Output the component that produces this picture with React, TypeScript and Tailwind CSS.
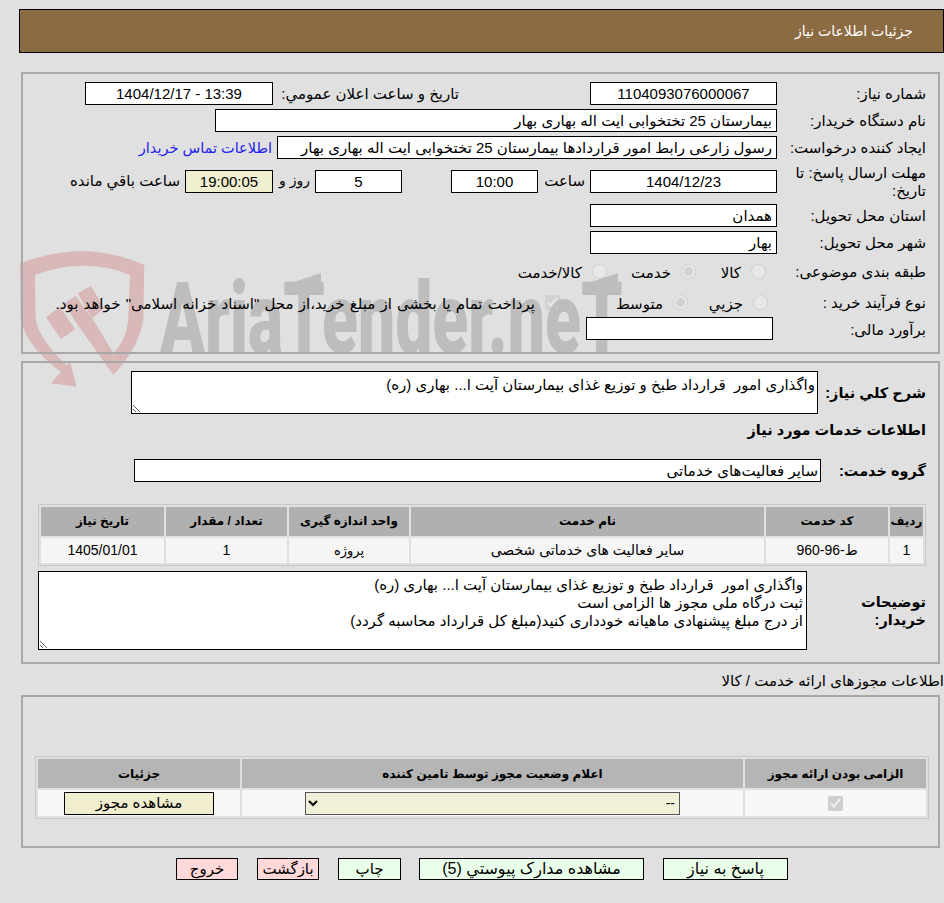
import type { ReactNode } from "react";

const font = "font-['Liberation_Sans','DejaVu_Sans',sans-serif]";

// فیلد فقط خواندنی با کادر سیاه
const Box = ({ className = "", children }: { className?: string; children?: ReactNode }) => (
  <div className={`h-[23px] border border-black bg-white leading-[21px] whitespace-nowrap overflow-hidden ${className}`}>
    {children}
  </div>
);

const Label = ({ children, className = "pt-[1px]" }: { children: ReactNode; className?: string }) => (
  <div className={`w-[161px] shrink-0 pr-[12px] text-right whitespace-nowrap ${className}`}>{children}</div>
);

const Logo = () => (
  <svg viewBox="0 0 450 480" className="absolute left-[15px] top-[240px] w-[150px] h-[160px]">
    <path
      fill="#d9b8b9"
      d="M15 70 Q210 -5 388 75 L385 235 Q375 320 295 405 L295 340 Q335 300 340 235 L345 105 Q210 50 60 105 L62 235 Q70 300 165 385 L150 405 Q30 320 17 235 Z"
    />
    <path fill="#d9b8b9" d="M165 365 L185 440 L108 430 Z" />
    <path fill="#d9b8b9" d="M93 232 L135 200 L180 268 L138 298 Z" />
    <path fill="#d9b8b9" d="M148 190 L182 168 L232 235 L295 340 L295 405 L178 240 Z" />
    <path fill="#d9b8b9" d="M188 160 L228 138 L268 205 L232 235 Z" />
  </svg>
);

// شیب بالای حرف T در لوگو
const TSlants = () => (
  <svg viewBox="0 0 944 903" className="absolute inset-0 w-[944px] h-[903px]">
    <path fill="#bdbdbd" d="M288 284 L321 273 L321 284 Z" />
    <path fill="#bdbdbd" d="M585 284 L618 273 L618 284 Z" />
  </svg>
);

const Radio = ({ checked, label, circle = "", text }: { checked?: boolean; label: string; circle?: string; text: string }) => (
  <div className="flex items-center">
    <input type="radio" disabled defaultChecked={checked} className={`w-[15px] h-[15px] m-0 opacity-60 ${circle}`} />
    <span className={`pt-[4px] ${text}`}>{label}</span>
  </div>
);

const Th = ({ className = "", children }: { className?: string; children: ReactNode }) => (
  <div className={`flex h-[29px] items-center justify-center whitespace-nowrap bg-[#b0b0b0] font-bold text-[12px] ${className}`}>{children}</div>
);

const Td = ({ className = "", children }: { className?: string; children?: ReactNode }) => (
  <div className={`flex h-[25px] items-center justify-center bg-[#f5f5f5] text-[14px] ${className}`}>{children}</div>
);

const ActionButton = ({ className, children }: { className: string; children: ReactNode }) => (
  <button className={`h-[22px] border border-black leading-[20px] text-center ${className}`}>{children}</button>
);

export default function App() {
  return (
    <div dir="rtl" className={`relative w-[944px] h-[903px] overflow-hidden bg-[#e0e0e0] text-[15px] text-black ${font}`}>
      {/* واترمارک پشت فرم */}
      <div className="absolute inset-0 z-0 pointer-events-none">
        <Logo />
        <div
          dir="ltr"
          className="absolute left-[160px] top-[256px] origin-top-left scale-x-[0.66] text-[100px] leading-[125px] font-black text-[#bdbdbd] whitespace-nowrap font-['Roboto',sans-serif]"
        >
          AriaTender.neT
        </div>
        <TSlants />
      </div>

      <div className="relative z-10 pt-[9px] pl-[21px] pr-[4px]">
        <div className="-ml-[2px] -mr-[4px] flex h-[44px] items-center border border-black bg-[#8b6b42] pr-[30px] text-[14px] text-white">
          جزئیات اطلاعات نیاز
        </div>

        {/* مشخصات نیاز */}
        <div className="mt-[19px] h-[282px] border-2 border-[#a8a8a8] pt-[8px]">
          <div className="flex h-[27px] items-start">
            <Label>شماره نیاز:</Label>
            <Box className="w-[187px] text-center">1104093076000067</Box>
            <div className="w-[317px] shrink-0 pr-[131px] pt-[1px] whitespace-nowrap">تاریخ و ساعت اعلان عمومي:</div>
            <Box className="w-[188px] text-center" >
              <span dir="ltr">1404/12/17 - 13:39</span>
            </Box>
          </div>
          <div className="flex h-[27px] items-start">
            <Label>نام دستگاه خریدار:</Label>
            <Box className="w-[562px] pr-[4px]">بیمارستان 25 تختخوابی ایت اله بهاری بهار</Box>
          </div>
          <div className="flex h-[34px] items-start">
            <Label>ایجاد کننده درخواست:</Label>
            <Box className="w-[500px] pr-[4px]">رسول زارعی رابط امور قراردادها بیمارستان 25 تختخوابی ایت اله بهاری بهار</Box>
            <a className="mr-[5px] pt-[2px] text-[14.5px] text-[#2222ee] whitespace-nowrap">اطلاعات تماس خریدار</a>
          </div>
          <div className="flex h-[34px] items-start">
            <div className="w-[161px] shrink-0 pr-[12px] text-right leading-[18px] -mt-[6px]">مهلت ارسال پاسخ: تا تاریخ:</div>
            <Box className="h-[22px] w-[187px] text-center">1404/12/23</Box>
            <div className="w-[52px] shrink-0 pr-[5px]">ساعت</div>
            <Box className="h-[22px] w-[87px] text-center">10:00</Box>
            <div className="w-[49px] shrink-0" />
            <Box className="h-[22px] w-[87px] text-center">5</Box>
            <div className="w-[42px] shrink-0 pr-[5px] text-[14px] whitespace-nowrap">روز و</div>
            <Box className="h-[22px] w-[88px] text-center !bg-[#f0f0d0]">19:00:05</Box>
            <div className="pr-[5px] whitespace-nowrap">ساعت باقي مانده</div>
          </div>
          <div className="flex h-[27px] items-start">
            <Label>استان محل تحویل:</Label>
            <Box className="h-[22px] w-[187px] pr-[4px]">همدان</Box>
          </div>
          <div className="flex h-[27px] items-start">
            <Label>شهر محل تحویل:</Label>
            <Box className="h-[22px] w-[187px] pr-[4px]">بهار</Box>
          </div>
          <div className="-mt-[2px] flex h-[31px] items-center">
            <Label>طبقه بندی موضوعی:</Label>
            <Radio circle="mr-[11px]" text="w-[55px] pr-[10px]" label="کالا" />
            <Radio checked text="w-[74px] pr-[10px]" label="خدمت" />
            <Radio text="pr-[10px] whitespace-nowrap" label="کالا/خدمت" />
          </div>
          <div className="flex h-[31px] items-center">
            <Label>نوع فرآیند خرید :</Label>
            <Radio circle="mr-[9px]" text="w-[65px] pr-[10px]" label="جزیي" />
            <Radio checked text="w-[113px] pr-[10px]" label="متوسط" />
            <input type="checkbox" disabled defaultChecked className="w-[15px] h-[15px] m-0 opacity-60" />
            <span className="pr-[10px] pt-[4px] whitespace-nowrap [word-spacing:1px]">پرداخت تمام یا بخشی از مبلغ خرید،از محل "اسناد خزانه اسلامی" خواهد بود.</span>
          </div>
          <div className="-mt-[3px] flex h-[27px] items-center">
            <Label className="pt-[3px]">برآورد مالی:</Label>
            <Box className="mr-[4px] w-[187px]" />
          </div>
        </div>

        {/* شرح نیاز و خدمات */}
        <div className="mt-[7px] h-[303px] border-2 border-[#a8a8a8] pt-[8px]">
          <div className="flex items-center">
            <div className="w-[120px] shrink-0 pr-[12px] pt-[2px] font-bold text-[14.5px] whitespace-nowrap">شرح کلي نياز:</div>
            <textarea
              readOnly
              className="h-[43px] w-[687px] border border-black bg-white pr-[2px] pt-[4px] leading-[17px] outline-none"
              defaultValue="واگذاری امور  قرارداد طبخ و توزیع غذای بیمارستان آیت ا... بهاری (ره)"
            />
          </div>
          <div className="mt-[6px] pr-[12px] font-bold text-[14.5px] leading-[20px]">اطلاعات خدمات مورد نیاز</div>
          <div className="mt-[19px] flex items-center">
            <div className="w-[117px] shrink-0 pr-[12px] pt-[2px] font-bold text-[14.5px]">گروه خدمت:</div>
            <Box className="h-[22px] w-[687px] pr-[2px]">سایر فعالیت‌های خدماتی</Box>
          </div>
          <div className="mr-[12px] mt-[21px] w-[888px] border border-[#c8c8c8] p-[2px]">
            <div className="grid grid-cols-[33px_122px_353px_120px_121px_123px] gap-[2px]">
              <Th>ردیف</Th>
              <Th>کد خدمت</Th>
              <Th>نام خدمت</Th>
              <Th>واحد اندازه گیری</Th>
              <Th>تعداد / مقدار</Th>
              <Th>تاریخ نیاز</Th>
              <Td>1</Td>
              <Td>ط-96-960</Td>
              <Td>سایر فعالیت های خدماتی شخصی</Td>
              <Td className="!text-[13px]">پروژه</Td>
              <Td>1</Td>
              <Td>1405/01/01</Td>
            </div>
          </div>
          <div className="mt-[5px] flex items-center">
            <div className="w-[131px] shrink-0 pr-[12px] pt-[2px] font-bold text-[14.5px] leading-[18px]">توضیحات خریدار:</div>
            <textarea
              readOnly
              className="h-[79px] w-[769px] border border-black bg-white pr-[3px] pt-[4px] leading-[18px] outline-none"
              defaultValue={"واگذاری امور  قرارداد طبخ و توزیع غذای بیمارستان آیت ا... بهاری (ره)\nثبت درگاه ملی مجوز ها الزامی است\nاز درج مبلغ پیشنهادی ماهیانه خودداری کنید(مبلغ کل قرارداد محاسبه گردد)"}
            />
          </div>
        </div>

        {/* مجوزها */}
        <div className="-mr-[4px] mt-[7px] h-[24px] leading-[20px]">اطلاعات مجوزهای ارائه خدمت / کالا</div>
        <div className="h-[153px] border-2 border-[#a8a8a8] pt-[59px]">
          <div className="mr-[9px] w-[894px] border border-[#c8c8c8] p-[2px]">
            <div className="grid grid-cols-[181px_501px_202px] gap-[2px]">
              <Th className="!bg-[#b5b5b5]">الزامی بودن ارائه مجوز</Th>
              <Th className="!bg-[#b5b5b5]">اعلام وضعیت مجوز توسط تامین کننده</Th>
              <Th className="!bg-[#b5b5b5]">جزئیات</Th>
              <Td className="!h-[26px] !bg-[#f7f7f7]">
                <input type="checkbox" disabled defaultChecked className="w-[15px] h-[15px] m-0" />
              </Td>
              <Td className="!h-[26px] !bg-[#f7f7f7]">
                <select disabled className="h-[23px] w-[375px] border border-[#555] bg-[#f0f0d8] text-[14px]">
                  <option>--</option>
                </select>
              </Td>
              <Td className="!h-[26px] !bg-[#f7f7f7]">
                <button className="h-[23px] w-[150px] border border-black bg-[#f0eecf] text-[15px] leading-[20px]">مشاهده مجوز</button>
              </Td>
            </div>
          </div>
        </div>

        {/* دکمه‌ها */}
        <div className="mt-[10px] flex pr-[152px]">
          <ActionButton className="w-[125px] bg-[#eaffea] text-[16px]">پاسخ به نیاز</ActionButton>
          <ActionButton className="mr-[19px] w-[225px] bg-[#eaffea] text-[16px]">مشاهده مدارک پیوستي (5)</ActionButton>
          <ActionButton className="mr-[18px] w-[63px] bg-[#eaffea] text-[15px]">چاپ</ActionButton>
          <ActionButton className="mr-[19px] w-[62px] bg-[#ffd9d9] text-[15px]">بازگشت</ActionButton>
          <ActionButton className="mr-[19px] w-[62px] bg-[#ffd9d9] text-[15px]">خروج</ActionButton>
        </div>
      </div>
    </div>
  );
}
